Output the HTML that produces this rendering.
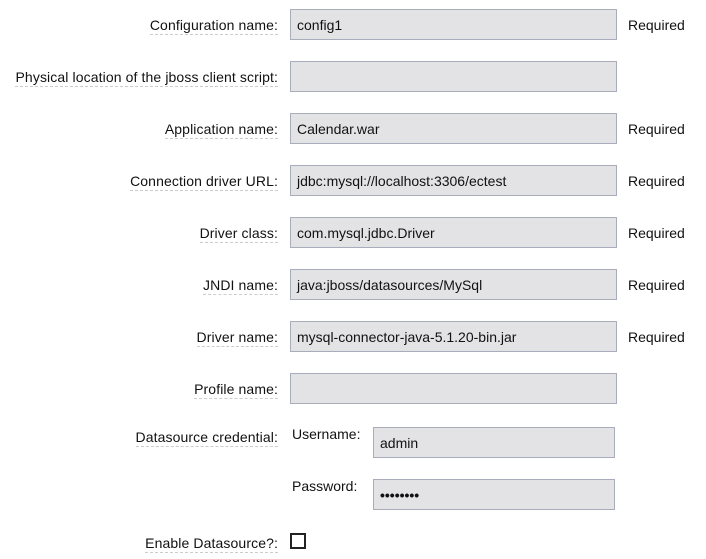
<!DOCTYPE html>
<html><head><style>
body{margin:0;width:706px;height:559px;background:#fff;font-family:"Liberation Sans",Arial,sans-serif;font-size:14px;color:#111;position:relative;overflow:hidden}
.l{position:absolute;right:428px;border-bottom:1px dashed #ccc;line-height:16px;padding-bottom:1px;white-space:nowrap;letter-spacing:0.11px}
.i{position:absolute;left:290px;background:#e3e3e5;border:1px solid #a9acbb;line-height:30px;padding-left:6px;box-sizing:border-box;width:327px;height:31px;white-space:nowrap}
.r{position:absolute;left:628px;line-height:16px}
.s{position:absolute;line-height:16px}
</style></head><body>
<div class="l" style="top:17px">Configuration name:</div><div class="i" style="top:9px">config1</div><div class="r" style="top:17px">Required</div>
<div class="l" style="top:69px">Physical location of the jboss client script:</div><div class="i" style="top:61px"></div>
<div class="l" style="top:121px">Application name:</div><div class="i" style="top:113px">Calendar.war</div><div class="r" style="top:121px">Required</div>
<div class="l" style="top:173px">Connection driver URL:</div><div class="i" style="top:165px">jdbc:mysql://localhost:3306/ectest</div><div class="r" style="top:173px">Required</div>
<div class="l" style="top:225px">Driver class:</div><div class="i" style="top:217px">com.mysql.jdbc.Driver</div><div class="r" style="top:225px">Required</div>
<div class="l" style="top:277px">JNDI name:</div><div class="i" style="top:269px">java:jboss/datasources/MySql</div><div class="r" style="top:277px">Required</div>
<div class="l" style="top:329px">Driver name:</div><div class="i" style="top:321px">mysql-connector-java-5.1.20-bin.jar</div><div class="r" style="top:329px">Required</div>
<div class="l" style="top:381px">Profile name:</div><div class="i" style="top:373px"></div>
<div class="l" style="top:429px">Datasource credential:</div>
<div class="s" style="left:292px;top:426px">Username:</div>
<div class="i" style="left:373px;width:242px;top:427px">admin</div>
<div class="s" style="left:292px;top:478px">Password:</div>
<div class="i" style="left:373px;width:242px;top:479px;font-weight:bold">••••••••</div>
<div class="l" style="top:535px">Enable Datasource?:</div>
<div style="position:absolute;left:290px;top:533px;width:12px;height:12px;border:2px solid #222;background:#fff"></div>
</body></html>
